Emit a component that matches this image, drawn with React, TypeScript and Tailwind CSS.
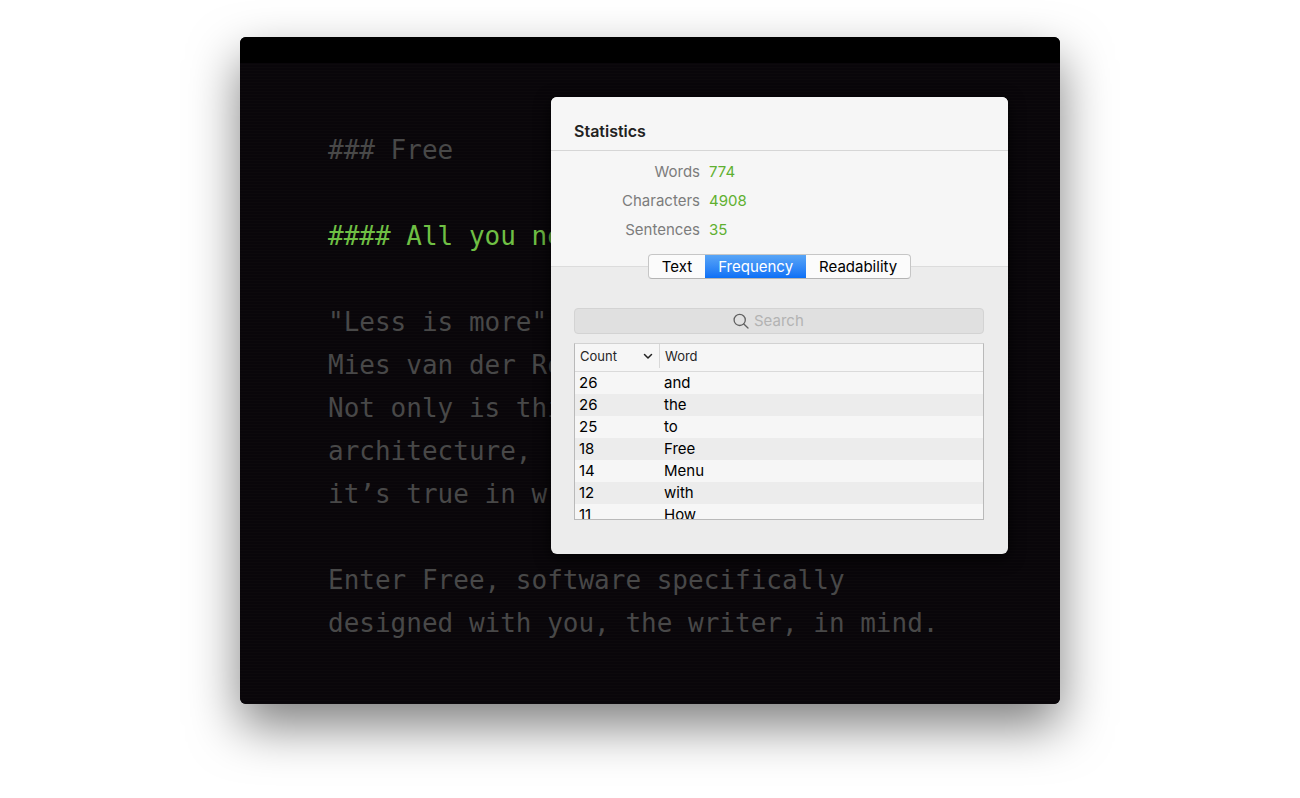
import React, { useState } from 'react';

type Tab = 'Text' | 'Frequency' | 'Readability';

const TABS: Tab[] = ['Text', 'Frequency', 'Readability'];

const STATS = [
  { label: 'Words', value: 774 },
  { label: 'Characters', value: 4908 },
  { label: 'Sentences', value: 35 },
];

const WORDS = [
  { count: 26, word: 'and' },
  { count: 26, word: 'the' },
  { count: 25, word: 'to' },
  { count: 18, word: 'Free' },
  { count: 14, word: 'Menu' },
  { count: 12, word: 'with' },
  { count: 11, word: 'How' },
];

const SearchField: React.FC = () => {
  const [query, setQuery] = useState('');

  return (
    <div className="flex h-[26px] items-center justify-center gap-1 rounded border border-[#d3d3d3] bg-[#e0e0e0]">
      <label htmlFor="search" aria-label="Search">
        <svg width="16" height="16" viewBox="0 0 16 16" fill="none" stroke="#616161" strokeWidth="1.3" strokeLinecap="round">
          <circle cx="6.7" cy="6.9" r="5.6" />
          <path d="M10.8 11 L15 15" />
        </svg>
      </label>
      <input
        id="search"
        type="text"
        placeholder="Search"
        value={query}
        onChange={e => setQuery(e.target.value)}
        className="w-[72px] bg-transparent px-px text-[15px] leading-6 outline-none placeholder:text-[#b3b3b3]"
      />
    </div>
  );
};

const FrequencyTable: React.FC = () => (
  <div className="h-[177px] overflow-hidden border border-[#b9b9b9] border-t-[#d2d2d2] bg-[#f6f6f6]">
    <table className="w-full table-fixed border-collapse text-left text-[15px] leading-[22px] text-black">
      <thead>
        <tr className="h-[27px] border-b border-[#dadada] align-top text-[13px] leading-6 text-[#262626]">
          <th className="w-[85px] pl-[5px] font-normal">
            <button className="flex w-full items-center justify-between border-r border-[#d8d8d8] pr-[5px]">
              Count
              <svg width="12" height="12" viewBox="0 0 12 12" fill="none" stroke="#222" strokeWidth="1.5" strokeLinecap="round" strokeLinejoin="round">
                <path d="M2.5 4.5 L6 8 L9.5 4.5" />
              </svg>
            </button>
          </th>
          <th className="pl-[5px] font-normal">Word</th>
        </tr>
      </thead>
      <tbody>
        {WORDS.map(({ count, word }) => (
          <tr key={word} className="even:bg-[#ececec]">
            <td className="pl-1">{count}</td>
            <td className="pl-1">{word}</td>
          </tr>
        ))}
      </tbody>
    </table>
  </div>
);

const StatisticsPopover: React.FC = () => {
  const [activeTab, setActiveTab] = useState<Tab>('Frequency');

  return (
    <section className="absolute top-[60px] right-[52px] w-[457px] overflow-hidden rounded-md bg-[#ececec] font-['Inter',sans-serif] text-[15px] shadow-[0_4px_16px_rgba(0,0,0,0.8)]">
      <header className="border-b border-[#d6d6d6] bg-[#f6f6f6] px-[23px] pt-6 pb-2">
        <h2 className="text-base leading-[21px] font-semibold text-[#222]">Statistics</h2>
      </header>
      <dl className="flex flex-col gap-[5px] border-b border-[#dcdcdc] bg-[#f6f6f6] pt-[9px] pb-6">
        {STATS.map(({ label, value }) => (
          <div key={label} className="flex gap-[9px] leading-6">
            <dt className="w-[149px] text-right text-[#7c7c7c]">{label}</dt>
            <dd className="text-[#5fb030]">{value}</dd>
          </div>
        ))}
      </dl>

      <div className="relative -mt-[13px] flex justify-center">
        <div role="tablist" className="flex overflow-hidden rounded border border-[#c6c6c6] border-b-[#b4b4b4] bg-[#fbfbfb]">
          {TABS.map(tab => (
            <button
              key={tab}
              role="tab"
              aria-selected={activeTab === tab}
              onClick={() => setActiveTab(tab)}
              className={`px-[13px] leading-[23px] ${
                activeTab === tab ? 'bg-linear-to-b from-[#58a5f6] to-[#0a70f6] text-white' : 'text-black'
              }`}
            >
              {tab}
            </button>
          ))}
        </div>
      </div>

      <div className="flex flex-col gap-[9px] pt-[29px] pr-6 pb-[34px] pl-[23px]">
        <SearchField />
        <FrequencyTable />
      </div>
    </section>
  );
};

const App: React.FC = () => {
  return (
    <div className="min-h-screen bg-white px-4 pt-[37px] pb-[94px]">
      <main className="relative mx-auto max-w-[820px] rounded-md shadow-[0_22px_50px_rgba(0,0,0,0.5)]">
        <div className="overflow-hidden rounded-md bg-[#09060a]">
          <div className="h-[26px] bg-black" />
          <article className="bg-[repeating-linear-gradient(0deg,#0c090c_0_1px,#09060a_1px_3px)] px-[88px] pt-[66px] pb-[59px] font-['DejaVu_Sans_Mono',monospace] text-[26px] leading-[43px] whitespace-pre text-[#484848]">
            <h1>### Free</h1>
            <h2 className="py-[43px] text-[#6fbf44]">#### All you need</h2>
            <p>
              "Less is more",<br />
              Mies van der Rohe<br />
              Not only is this<br />
              architecture,<br />
              it’s true in writing
            </p>
            <p className="pt-[43px]">
              Enter Free, software specifically<br />
              designed with you, the writer, in mind.
            </p>
          </article>
        </div>
        <StatisticsPopover />
      </main>
    </div>
  );
};

export default App;
